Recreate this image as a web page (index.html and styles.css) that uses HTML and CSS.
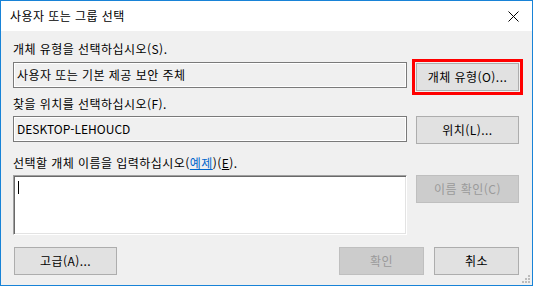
FILE: index.html
```html
<!DOCTYPE html>
<html lang="ko">
<head>
  <meta charset="UTF-8">
  <title>사용자 또는 그룹 선택</title>
  <link rel="stylesheet" href="styles.css">
</head>
<body>

<div class="dialog">
  <div class="titlebar">
    <span class="title">사용자 또는 그룹 선택</span>
    <span class="close">
      <svg width="11" height="11" viewBox="0 0 11 11">
        <path d="M0.5 0.5 L10.5 10.5 M10.5 0.5 L0.5 10.5" stroke="#000" stroke-width="1" fill="none"/>
      </svg>
    </span>
  </div>

  <div class="content">
    <div class="label">개체 유형을 선택하십시오(S).</div>
    <div class="row row-first">
      <div class="field">사용자 또는 기본 제공 보안 주체</div>
      <button class="btn btn-focus">개체 유형(O)...</button>
    </div>

    <div class="label label-second">찾을 위치를 선택하십시오(F).</div>
    <div class="row row-second">
      <div class="field field-latin">DESKTOP-LEHOUCD</div>
      <button class="btn">위치(L)...</button>
    </div>

    <div class="label label-third">선택할 개체 이름을 입력하십시오(<span class="link">예제</span>)(<u>E</u>).</div>
    <div class="row row-third">
      <div class="names"><span class="caret"></span></div>
      <button class="btn" disabled>이름 확인(C)</button>
    </div>

    <div class="actions">
      <button class="btn btn-wide">고급(A)...</button>
      <div class="spacer"></div>
      <button class="btn btn-small" disabled>확인</button>
      <button class="btn btn-small">취소</button>
    </div>
  </div>

  <svg class="grip" width="9" height="9" viewBox="0 0 9 9">
    <rect x="6" y="0" width="2" height="2" fill="#bcbcbc"/>
    <rect x="3" y="3" width="2" height="2" fill="#bcbcbc"/>
    <rect x="6" y="3" width="2" height="2" fill="#bcbcbc"/>
    <rect x="0" y="6" width="2" height="2" fill="#bcbcbc"/>
    <rect x="3" y="6" width="2" height="2" fill="#bcbcbc"/>
    <rect x="6" y="6" width="2" height="2" fill="#bcbcbc"/>
  </svg>
</div>

</body>
</html>
```

FILE: styles.css
```css
* {
  margin: 0;
  padding: 0;
  box-sizing: border-box;
}

html, body {
  background: #f0f0f0;
  font-family: "Noto Sans CJK KR", "Noto Sans", sans-serif;
  font-size: 12px;
  letter-spacing: 0.45px;
  color: #000;
}

.dialog {
  position: relative;
  width: 533px;
  height: 286px;
  border: 1px solid #1883d7;
  background: #f0f0f0;
}

.titlebar {
  height: 30px;
  background: #fff;
  display: flex;
  align-items: center;
  justify-content: space-between;
  padding: 0 13px 0 9px;
}

.title {
  line-height: 16px;
}

.close {
  display: flex;
}

.content {
  padding: 10px 12px 0 12px;
}

.label {
  line-height: 16px;
  white-space: nowrap;
}

.label-second {
  margin-top: 5px;
}

.label-third {
  margin-top: 11px;
}

.link {
  color: #0066cc;
  text-decoration: underline;
}

.row {
  display: grid;
  grid-template-columns: 394px 103px;
  column-gap: 9px;
  align-items: start;
}

.row-first {
  margin-top: 5px;
}

.row-first .btn {
  margin-top: 1px;
}

.row-second {
  margin-top: 4px;
}

.row-third {
  margin-top: 4px;
}

.field {
  height: 26px;
  border: 1px solid #7a7a7a;
  box-shadow: inset 0 0 0 1px #fff;
  padding: 0 3px;
  line-height: 24px;
  white-space: nowrap;
  overflow: hidden;
}

.field-latin {
  letter-spacing: 0;
}

.names {
  height: 60px;
  background: #fff;
  border-top: 1px solid #a0a0a0;
  border-left: 1px solid #a0a0a0;
  border-right: 1px solid #fff;
  border-bottom: 1px solid #fff;
  box-shadow: inset 1px 1px 0 #696969, inset -1px -1px 0 #e3e3e3;
  padding: 5px 0 0 4px;
}

.caret {
  display: block;
  width: 1px;
  height: 13px;
  background: #000;
}

.btn {
  height: 28px;
  background: #e1e1e1;
  border: 1px solid #adadad;
  font-family: "Noto Sans CJK KR", "Noto Sans", sans-serif;
  font-size: 12px;
  letter-spacing: 0.45px;
  color: #000;
  line-height: 16px;
  white-space: nowrap;
}

.btn:disabled {
  background: #cccccc;
  border-color: #bfbfbf;
  color: #9a9a9a;
}

.btn-focus {
  outline: 3px solid #ff0000;
  outline-offset: 1px;
}

.actions {
  display: flex;
  gap: 10px;
  margin-top: 12px;
  margin-right: 1px;
}

.btn-wide {
  width: 103px;
  margin-left: 1px;
}

.btn-small {
  width: 85px;
}

.spacer {
  flex: 1;
}

.grip {
  position: absolute;
  right: 1px;
  bottom: 1px;
}
```
